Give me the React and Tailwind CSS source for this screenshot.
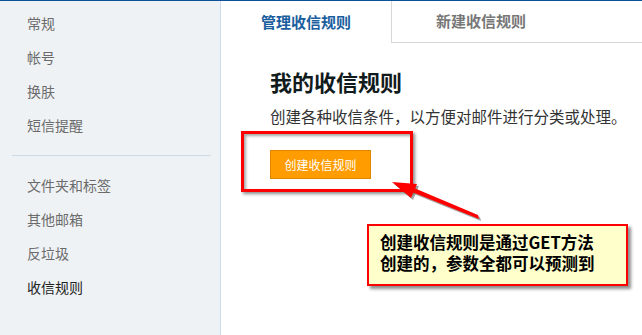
import React from 'react'

const groupOne = ["常规", "帐号", "换肤", "短信提醒"];
const groupTwo = ["文件夹和标签", "其他邮箱", "反垃圾", "收信规则"];

const cjk = { fontFamily: '"Noto Sans CJK SC", "Noto Sans", sans-serif' };

const App = () => {
  return (
    <div
      className="relative flex h-[335px] w-[642px] overflow-hidden border-t border-[#0d5296] bg-white"
      style={cjk}
    >
      {/* sidebar */}
      <div className="w-[221px] shrink-0 border-r border-[#c8dcee] bg-[#eff2f5] pt-[5px]">
        {groupOne.map((item) => (
          <div key={item} className="flex h-[34px] items-center pl-[27px] text-[14px] text-[#6b6b6b]">
            {item}
          </div>
        ))}
        <div className="ml-[12px] mr-[9px] mt-[13px] h-px bg-[#cbdbe8]" />
        <div className="mt-[12px]">
          {groupTwo.map((item) => (
            <div
              key={item}
              className={`flex h-[34px] items-center pl-[27px] text-[14px] ${item === "收信规则" ? "text-[#222]" : "text-[#6b6b6b]"}`}
            >
              {item}
            </div>
          ))}
        </div>
      </div>

      {/* main */}
      <div className="flex flex-1 flex-col">
        <div className="flex h-[42px]">
          <div className="flex w-[171px] items-center justify-center border-r border-[#d8d8d8] bg-white text-[15px] font-bold text-[#1a5e9e]">
            管理收信规则
          </div>
          <div className="flex w-[178px] items-center justify-center border-b border-[#d8d8d8] text-[15px] font-bold text-[#777]">
            新建收信规则
          </div>
          <div className="flex-1 border-b border-[#d8d8d8]" />
        </div>

        <div className="pl-[49px]">
          <h1 className="mt-[24px] text-[22px] font-bold leading-[28px] text-[#111a1c]">我的收信规则</h1>
          <p className="mt-[11px] text-[15.5px] leading-[20px] text-[#333]">
            创建各种收信条件，以方便对邮件进行分类或处理。
          </p>
          <button className="mt-[24px] flex h-[29px] w-[101px] items-center justify-center border border-[#e08600] bg-[#ff9c00] text-[12px] text-white">
            创建收信规则
          </button>
        </div>
      </div>

      {/* annotation: red frame */}
      <div className="pointer-events-none absolute left-[241px] top-[130px] h-[61px] w-[172px] border-[3px] border-[#ff0000] shadow-[2px_2px_3px_rgba(0,0,0,0.45),inset_2px_2px_3px_rgba(0,0,0,0.35)]" />

      {/* annotation: arrow */}
      <svg className="pointer-events-none absolute left-0 top-0" width="642" height="335">
        <g transform="translate(2 2)" opacity="0.35">
          <polygon points="478,214 479,218 412,191 414,187" fill="#000" />
          <polygon points="392,181 417,183 411,197" fill="#000" />
        </g>
        <polygon points="478,214 479,218 412,191 414,187" fill="#ff0000" />
        <polygon points="392,181 417,183 411,197" fill="#ff0000" />
      </svg>

      {/* annotation: callout */}
      <div className="absolute left-[367px] top-[223px] flex h-[62px] w-[261px] flex-col gap-[1px] border-2 border-[#ff0000] bg-[#ffffcc] pl-[11px] pt-[6px] text-[16.5px] font-bold leading-[20px] text-black shadow-[3px_3px_3px_rgba(0,0,0,0.45)]">
        <div className="h-[20px]">创建收信规则是通过GET方法</div>
        <div className="h-[20px]">创建的，参数全都可以预测到</div>
      </div>
    </div>
  );
};

export default App;
